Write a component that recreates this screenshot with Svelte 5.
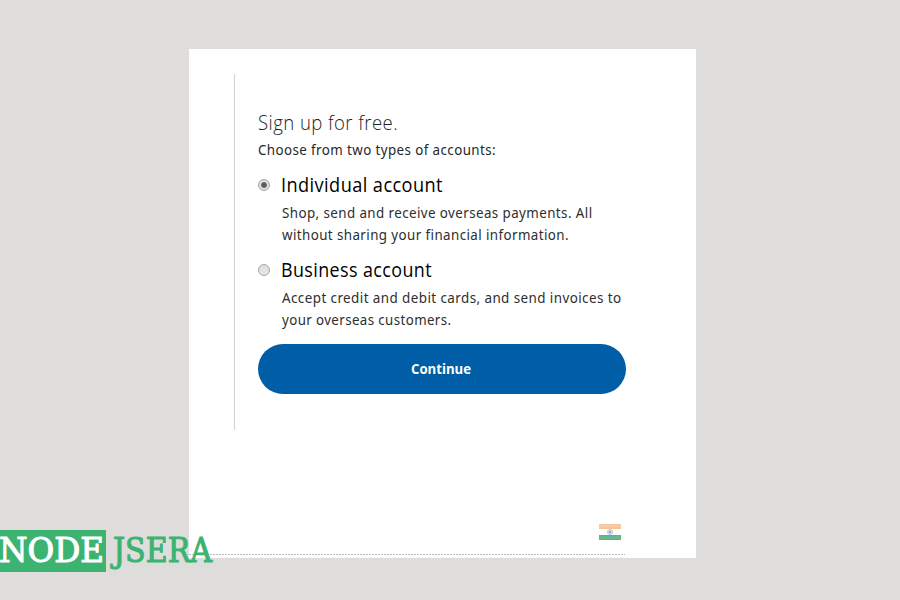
<script>
  let selected = $state('individual');
  const accounts = [
    {
      id: 'individual',
      title: 'Individual account',
      width: 162,
      lines: [
        ['Shop, send and receive overseas payments. All', 310.5],
        ['without sharing your financial information.', 287]
      ]
    },
    {
      id: 'business',
      title: 'Business account',
      width: 151,
      lines: [
        ['Accept credit and debit cards, and send invoices to', 339.5],
        ['your overseas customers.', 169.5]
      ]
    }
  ];
</script>

{#snippet line(text, width, size, height)}
  <svg class="line" width={width + 4} {height}>
    <text x="0" y={height - 6} font-size={size} textLength={width} lengthAdjust="spacingAndGlyphs">{text}</text>
  </svg>
{/snippet}

<main>
  <section class="card">
    <div class="signup">
      <h1>{@render line('Sign up for free.', 140, 19.5, 28)}</h1>
      <p class="intro">{@render line('Choose from two types of accounts:', 238, 14.5, 22)}</p>
      {#each accounts as a}
        <label class="account">
          <input type="radio" name="account" value={a.id} bind:group={selected} />
          <span class="copy">
            <span class="title">{@render line(a.title, a.width, 19.5, 28)}</span>
            {#each a.lines as l}
              <span class="detail">{@render line(l[0], l[1], 14.5, 22)}</span>
            {/each}
          </span>
        </label>
      {/each}
      <button>{@render line('Continue', 60, 15, 21)}</button>
    </div>
    <footer>
      <svg class="flag" width="22" height="16" viewBox="0 0 22 16">
        <rect width="22" height="16" fill="#fdfdfd" />
        <rect width="22" height="5" fill="#f9cba7" />
        <path d="M0 .5H22M0 4.5H22" stroke="#f7c39b" />
        <path d="M3 3.5H20" stroke="#f4bd96" stroke-dasharray="2 1" />
        <rect y="11" width="22" height="5" fill="#68b88d" />
        <path d="M0 11.5H22M0 15.5H22" stroke="#5fb287" />
        <circle cx="11" cy="8" r="2.5" fill="#d5dfef" stroke="#b9c8e2" />
        <circle cx="11" cy="8" r="1" fill="#8296c4" />
      </svg>
    </footer>
  </section>

  <div class="brand">
    <svg width="220" height="50">
      <rect width="106" height="42" fill="#3cb371" />
      <text x="-1" y="31.5" fill="#fff" stroke="#fff" textLength="105" lengthAdjust="spacingAndGlyphs">NODE</text>
      <text x="113" y="31.5" fill="#3cb371" stroke="#3cb371" textLength="99" lengthAdjust="spacingAndGlyphs">JSERA</text>
    </svg>
  </div>
</main>

<style>
  main {
    position: relative;
    box-sizing: border-box;
    width: 900px;
    height: 600px;
    padding: 49px 0 0 189px;
    overflow: hidden;
    background: #dedddb;
    font-family: "Noto Sans", sans-serif;
  }
  .card {
    box-sizing: border-box;
    width: 507px;
    height: 509px;
    padding-top: 25px;
    background: #fff;
  }
  .signup {
    box-sizing: border-box;
    width: 392px;
    height: 356px;
    margin-left: 45px;
    padding: 34px 0 0 23px;
    border-left: 1px solid #d2d2d2;
  }
  .line {
    display: block;
    overflow: visible;
  }
  .line text {
    fill: currentColor;
    letter-spacing: 0.45px;
  }
  h1,
  p {
    margin: 0 0 0 -0.5px;
    color: #1c1e1f;
  }
  h1 {
    height: 31px;
    font-family: "Open Sans", "Noto Sans", sans-serif;
    font-weight: 300;
  }
  .intro {
    height: 32px;
    color: #25282a;
  }
  .account {
    display: flex;
    align-items: flex-start;
    height: 85px;
  }
  input {
    appearance: none;
    box-sizing: border-box;
    flex: none;
    width: 12px;
    height: 12px;
    margin: 8px 11px 0 0;
    border: 1px solid #a6a6a6;
    border-radius: 50%;
    background: linear-gradient(#dedede, #e6e6e6);
  }
  input:checked {
    background: radial-gradient(circle, #5c5c5c 2.4px, #dedede 3.3px);
  }
  .copy,
  .title,
  .detail {
    display: block;
  }
  .title {
    height: 32px;
    margin-top: -1px;
    color: #000;
    font-family: "Open Sans", "Noto Sans", sans-serif;
  }
  .detail {
    padding-left: 0.5px;
    color: #2c2e2f;
  }
  button {
    display: flex;
    align-items: center;
    justify-content: center;
    width: 368px;
    height: 50px;
    margin-top: 3px;
    padding: 1px 0 0 2px;
    border: 0;
    border-radius: 25px;
    background: #005ea6;
    color: #fff;
    font-family: "Open Sans", sans-serif;
    font-weight: 700;
  }
  button .line text {
    letter-spacing: 0;
  }
  footer {
    display: flex;
    justify-content: flex-end;
    box-sizing: border-box;
    width: 436px;
    height: 126px;
    padding: 94px 4px 0 0;
    background: repeating-linear-gradient(90deg, #b8b8b8 0 2px, #fff 2px 3px) 0 124px / 100% 1px no-repeat;
  }
  .brand {
    position: absolute;
    left: 0;
    top: 530px;
  }
  .brand svg {
    display: block;
    overflow: visible;
  }
  .brand text {
    font-family: "DejaVu Serif", serif;
    font-size: 33.5px;
    stroke-width: 1.1px;
  }
</style>
